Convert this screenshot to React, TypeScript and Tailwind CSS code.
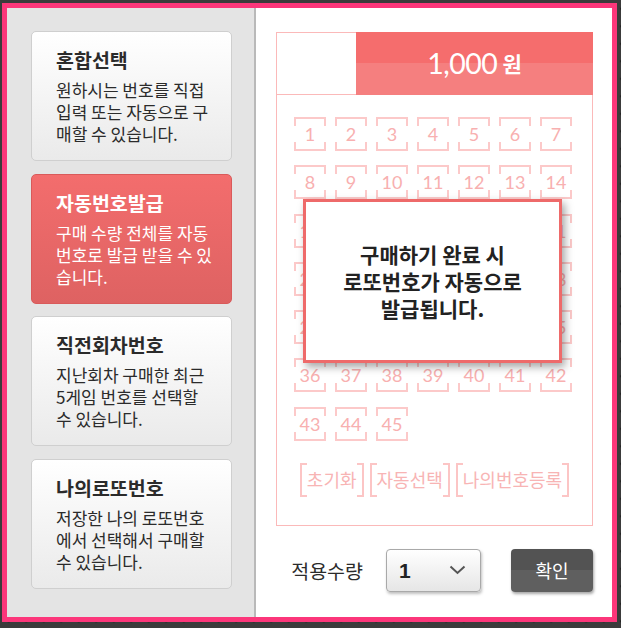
import React from 'react';

const KR = { fontFamily: '"Noto Sans CJK KR", "Noto Sans", sans-serif' };
const LATO = { fontFamily: 'Lato, "Noto Sans CJK KR", sans-serif' };

const modes = [
  { title: '혼합선택', lines: ['원하시는 번호를 직접', '입력 또는 자동으로 구', '매할 수 있습니다.'], active: false },
  { title: '자동번호발급', lines: ['구매 수량 전체를 자동', '번호로 발급 받을 수 있', '습니다.'], active: true },
  { title: '직전회차번호', lines: ['지난회차 구매한 최근', '5게임 번호를 선택할', '수 있습니다.'], active: false },
  { title: '나의로또번호', lines: ['저장한 나의 로또번호', '에서 선택해서 구매할', '수 있습니다.'], active: false },
];

const ModeCard = ({ title, lines, active }: { title: string; lines: string[]; active: boolean }) => (
  <div
    className={`h-[130px] rounded-[5px] border pl-[24px] pt-[15px] ${
      active
        ? 'border-[#d95a5a] bg-gradient-to-b from-[#f36d6d] to-[#de6262] text-white'
        : 'border-[#cfcfcf] bg-gradient-to-b from-white to-[#eaeaea] text-[#2b2b2b]'
    }`}
  >
    <div className="mb-[7px] text-[19.5px] font-bold leading-[25px]">{title}</div>
    <div className="text-[17px] leading-[22px]">
      {lines.map((l) => (
        <div key={l}>{l}</div>
      ))}
    </div>
  </div>
);

const NumBox = ({ n }: { n: number }) => (
  <div className="relative flex h-[34px] w-[32px] items-center justify-center border-2 border-[#fcc9c9]">
    <span className="absolute bottom-[7px] left-[-2px] top-[7px] w-[2px] bg-white" />
    <span className="absolute bottom-[7px] right-[-2px] top-[7px] w-[2px] bg-white" />
    <span className="relative text-[18px] leading-none text-[#f8b0b0]" style={LATO}>
      {n}
    </span>
  </div>
);

const BracketBtn = ({ label }: { label: string }) => (
  <div className="relative flex h-[34px] items-center border-2 border-[#fcc5c5] px-[5px]">
    <span className="absolute left-[5px] right-[5px] top-[-2px] h-[2px] bg-white" />
    <span className="absolute bottom-[-2px] left-[5px] right-[5px] h-[2px] bg-white" />
    <span className="relative text-[18px] text-[#f8b4b4]">{label}</span>
  </div>
);

export default function App() {
  const numbers = Array.from({ length: 45 }, (_, i) => i + 1);

  return (
    <div
      className="h-[628px] w-[621px] overflow-hidden bg-[#3b3b3b] bg-[radial-gradient(#1f1f1f_1.2px,transparent_1.6px)] bg-[length:17.5px_17.5px] pl-[2px] pt-[3px]"
      style={KR}
    >
      <div className="flex h-[619px] w-[615px] border-[5px] border-[#fc367a] bg-white">
        {/* left: purchase modes */}
        <div className="flex w-[249px] shrink-0 flex-col gap-[12.7px] border-r-2 border-[#b9b9b9] bg-[#e4e4e4] pl-[24px] pr-[22px] pt-[23px]">
          {modes.map((m) => (
            <ModeCard key={m.title} {...m} />
          ))}
        </div>

        {/* right: number sheet */}
        <div className="flex flex-1 flex-col pl-[20px] pt-[24px]">
          <div className="w-[317px]">
            <div className="flex h-[63px]">
              <div className="w-[80px] border-y border-l border-[#fbb9b9]" />
              <div className="flex flex-1 items-center justify-center gap-[5px] bg-[linear-gradient(#f56d6d_50%,#f57f7f_50%)] text-white">
                <span className="text-[28.5px] leading-none tracking-[-0.5px]" style={LATO}>
                  1,000
                </span>
                <span className="text-[21px] font-bold leading-none">원</span>
              </div>
            </div>

            <div className="relative border-x border-b border-[#fbb9b9] pb-[28px] pt-[22px]">
              <div className="ml-[17px] grid w-[278px] grid-cols-7 gap-x-[9px] gap-y-[14.3px]">
                {numbers.map((n) => (
                  <NumBox key={n} n={n} />
                ))}
              </div>

              <div className="mt-[22px] flex justify-center gap-[6px]">
                <BracketBtn label="초기화" />
                <BracketBtn label="자동선택" />
                <BracketBtn label="나의번호등록" />
              </div>

              {/* notice popup over the sheet */}
              <div className="absolute left-[26px] top-[104px] flex h-[164px] w-[259px] items-center justify-center border-[3px] border-[#ee6a6a] bg-white text-center text-[21px] font-bold leading-[27px] text-[#222] shadow-[3px_4px_8px_rgba(0,0,0,0.35)]">
                <div>
                  구매하기 완료 시
                  <br />
                  로또번호가 자동으로
                  <br />
                  발급됩니다.
                </div>
              </div>
            </div>

            <div className="mt-[23px] flex items-center justify-end">
              <span className="mr-[23px] text-[19.5px] text-[#2b2b2b]">적용수량</span>
              <div className="mr-[30px] flex h-[43px] w-[95px] items-center justify-between rounded-[4px] border border-[#a9a9a9] bg-gradient-to-b from-white to-[#e6e6e6] pl-[12px] pr-[14px] shadow-[1px_2px_3px_rgba(0,0,0,0.25)]">
                <span
                  className="text-[21px] font-bold leading-none text-[#222]"
                  style={{ fontFamily: '"Liberation Sans", Arial, sans-serif' }}
                >
                  1
                </span>
                <svg width="17" height="10" viewBox="0 0 17 10" fill="none">
                  <polyline points="1.5,1.5 8.5,8 15.5,1.5" stroke="#555" strokeWidth="2" />
                </svg>
              </div>
              <button className="flex h-[43px] w-[82px] items-center justify-center rounded-[4px] bg-[linear-gradient(#535353_50%,#5f5f5f_50%)] text-[18px] text-white shadow-[1px_2px_3px_rgba(0,0,0,0.35)]">
                확인
              </button>
            </div>
          </div>
        </div>
      </div>
    </div>
  );
}
